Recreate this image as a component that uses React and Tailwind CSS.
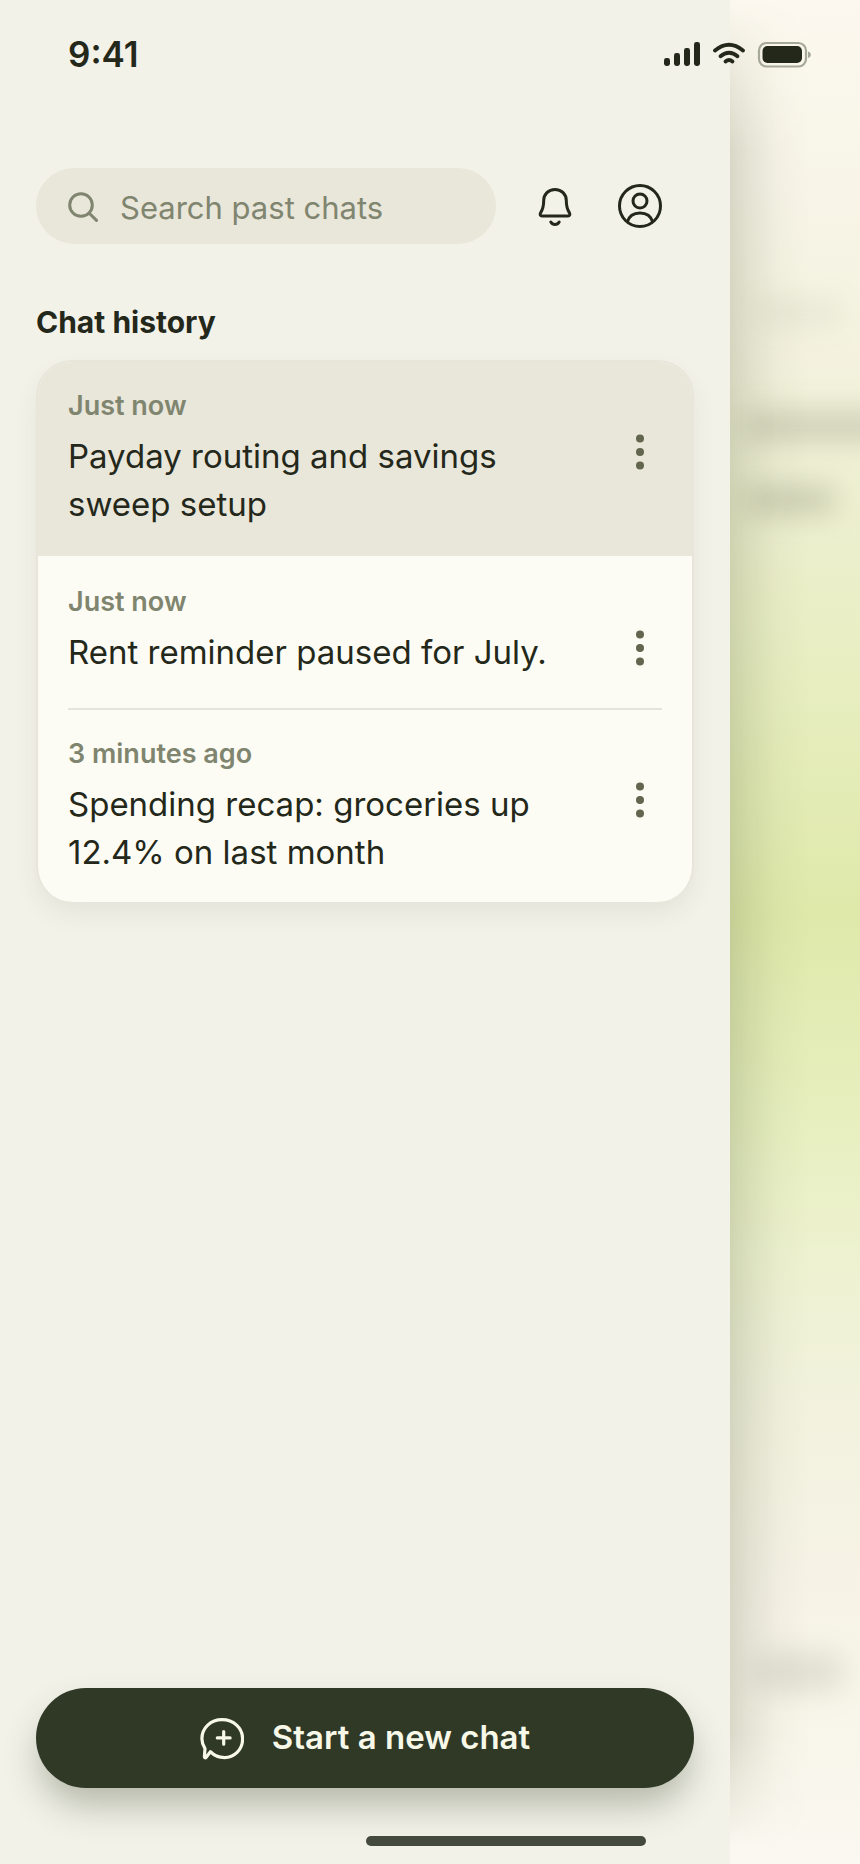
import React from 'react';

const chats = [
  { time: 'Just now', title: 'Payday routing and savings sweep setup' },
  { time: 'Just now', title: 'Rent reminder paused for July.' },
  { time: '3 minutes ago', title: 'Spending recap: groceries up 12.4% on last month' },
];

const rowStyles = [
  'bg-[#e9e6da] pt-[26px] pb-7',
  'pt-7 pb-8',
  'pt-[26px] pb-[26px]',
];

function StatusBar() {
  return (
    <header className="absolute inset-x-0 top-0 z-20 flex h-[108px] items-center justify-between pr-[48px] pl-[68px]">
      <time className="text-[35px] leading-10 font-semibold">9:41</time>
      <svg width="150" height="32" viewBox="0 0 150 32" fill="none" aria-hidden="true">
        <g fill="#24281a">
          <rect x="2" y="20" width="6" height="8" rx="2.4" />
          <rect x="12" y="15" width="6" height="13" rx="2.4" />
          <rect x="22" y="10" width="6" height="18" rx="2.4" />
          <rect x="32" y="4" width="6" height="24" rx="2.4" />
          <rect x="100.500" y="8" width="39.500" height="17" rx="5" />
        </g>
        <g stroke="#24281a" strokeWidth="3.800" strokeLinecap="round">
          <path d="M53 12.500Q67 1 81 12.500" />
          <path d="M58.500 18.300Q67 11.200 75.500 18.300" />
          <path d="M63.500 23.500Q67 20.500 70.500 23.500" />
        </g>
        <rect x="97" y="5" width="47" height="23.500" rx="7.500" stroke="#a6a898" strokeWidth="2.200" />
        <path d="M146 13.500c3.800 1 3.800 5.500 0 6.500z" fill="#a6a898" />
      </svg>
    </header>
  );
}

function SearchIcon() {
  return (
    <svg width="32" height="32" viewBox="0 0 32 32" fill="none" stroke="#7f856f" strokeWidth="3" strokeLinecap="round" aria-hidden="true">
      <circle cx="13" cy="15" r="11.300" />
      <path d="M21.300 23.200l7.200 7.200" />
    </svg>
  );
}

function BellIcon() {
  return (
    <svg width="44" height="44" viewBox="0 0 44 44" fill="none" stroke="#24281a" strokeWidth="3" strokeLinecap="round" strokeLinejoin="round" aria-hidden="true">
      <path d="M22 5.400C15.500 5.400 10.700 10.200 10.700 16.500C10.700 22 10.300 24.500 7.700 28.600C6.600 30.400 7.200 32 9 32H35C36.800 32 37.400 30.400 36.300 28.600C33.700 24.500 33.300 22 33.300 16.500C33.300 10.200 28.500 5.400 22 5.400Z" />
      <path d="M17.800 38C19.800 41.300 24.200 41.300 26.200 38" />
    </svg>
  );
}

function ProfileIcon() {
  return (
    <svg width="44" height="44" viewBox="0 0 44 44" fill="none" stroke="#24281a" strokeWidth="3" aria-hidden="true">
      <circle cx="22" cy="22" r="20.500" />
      <circle cx="22" cy="17" r="7" />
      <path d="M9.300 38C11 32.200 15.500 29 22 29S33 32.200 34.700 38" />
    </svg>
  );
}

function NewChatIcon() {
  return (
    <svg width="44" height="44" viewBox="0 0 44 44" fill="none" stroke="currentColor" strokeWidth="3.200" strokeLinecap="round" strokeLinejoin="round" aria-hidden="true">
      <path d="M22 3.700C33.500 3.700 42.600 11.800 42.600 23C42.600 34 34 41.600 24.500 41.600C18.500 41.600 13.800 39.300 10.400 35.700L6.200 41.200C5.400 42.200 4.300 41.800 4.400 40.600L5 32.600C3 29.600 1.900 26.600 1.900 22.800C1.900 11.800 10.800 3.700 22 3.700Z" />
      <path d="M23.700 15.500V28.200M17.300 21.900H30.100" />
    </svg>
  );
}

function ChatRow({ chat, className, divided }) {
  return (
    <li>
      <div className={`px-[30px] ${className}`}>
        <p className="text-[27px] leading-9 font-semibold text-[#7f856f]">{chat.time}</p>
        <div className="mt-2 flex items-start justify-between">
          <a href="#chat" className="max-w-[480px] text-[33px] leading-[48px]">{chat.title}</a>
          <button type="button" aria-label={`Options for ${chat.title}`} className="flex h-10 w-11 shrink-0 items-center justify-center">
            <svg width="8" height="36" viewBox="0 0 8 36" fill="#62664f" aria-hidden="true">
              <circle cx="4" cy="4.500" r="4" />
              <circle cx="4" cy="18" r="4" />
              <circle cx="4" cy="31.500" r="4" />
            </svg>
          </button>
        </div>
      </div>
      {divided && <hr className="mx-[30px] border-t-2 border-[#e4e5da]" />}
    </li>
  );
}

export default function App() {
  return (
    <div className="relative flex min-h-screen overflow-hidden bg-[#f2f2e9] font-['Inter','Liberation_Sans',sans-serif] text-[#24281a]">
      <StatusBar />
      <aside className="flex min-w-0 flex-1 flex-col px-9 pt-[168px] pb-[18px]">
        <div className="flex items-center">
          <label className="flex h-[76px] min-w-0 flex-1 items-center gap-[20px] rounded-full bg-[#e9e6da] pr-6 pl-8">
            <SearchIcon />
            <input
              type="search"
              aria-label="Search past chats"
              placeholder="Search past chats"
              className="h-11 min-w-0 flex-1 bg-transparent pt-1 text-[31px] outline-none placeholder:text-[#7f856f]"
            />
          </label>
          <div className="flex gap-[41px] pr-8 pl-[37px]">
            <button type="button" aria-label="Notifications"><BellIcon /></button>
            <button type="button" aria-label="Profile"><ProfileIcon /></button>
          </div>
        </div>

        <h2 className="mt-[58px] text-[30px] leading-10 font-bold">Chat history</h2>
        <ul className="mt-[18px] overflow-hidden rounded-[36px] border-2 border-b-0 border-[#e8e6da] bg-[#fcfcf4] shadow-[0_12px_28px_-4px_rgba(50,55,30,0.09)]">
          {chats.map((chat, i) => (
            <ChatRow key={chat.title} chat={chat} className={rowStyles[i]} divided={i === 1} />
          ))}
        </ul>

        <button
          type="button"
          className="mt-auto flex h-[100px] shrink-0 items-center justify-center gap-7 rounded-full bg-[#2f3926] text-[33px] font-semibold text-[#f7f8e8] shadow-[0_20px_36px_-4px_rgba(50,55,30,0.32)]"
        >
          <NewChatIcon />
          Start a new chat
        </button>
        <div className="mt-12 flex justify-end pr-12">
          <div className="h-[10px] w-[280px] rounded-full bg-[#444a3e]" />
        </div>
      </aside>

      <div
        aria-hidden="true"
        className="relative w-[130px] shrink-0 overflow-hidden bg-[linear-gradient(180deg,#fcf8ef_0%,#f8f5e8_10%,#f4f2df_19%,#eef0d2_26%,#e8eec1_36%,#dfe9aa_49%,#e7efbf_60%,#eef2d1_68%,#f2f2df_76%,#f7f3e7_86%,#f8f6ea_92%,#faf8f0_100%)]"
      >
        <div className="flex h-full flex-col pt-[298px] pb-[172px]">
          <div className="ml-7 h-7 w-[84px] rounded-full bg-[#5f6650]/8 blur-[14px]" />
          <div className="mt-[86px] ml-4 h-7 w-[140px] bg-[#5f6650]/25 blur-[14px]" />
          <div className="mt-[46px] ml-4 h-7 w-[90px] rounded-full bg-[#5f6650]/26 blur-[14px]" />
          <div className="mt-auto ml-6 h-10 w-[90px] rounded-full bg-[#5f6650]/15 blur-[14px]" />
        </div>
        <div className="absolute inset-y-0 left-0 w-20 bg-[linear-gradient(90deg,rgba(75,85,50,0.18),rgba(75,85,50,0.11)_25%,rgba(75,85,50,0.03)_60%,transparent)] [mask-image:linear-gradient(180deg,transparent,black_8%,black_93%,transparent_99%)]" />
      </div>
    </div>
  );
}
